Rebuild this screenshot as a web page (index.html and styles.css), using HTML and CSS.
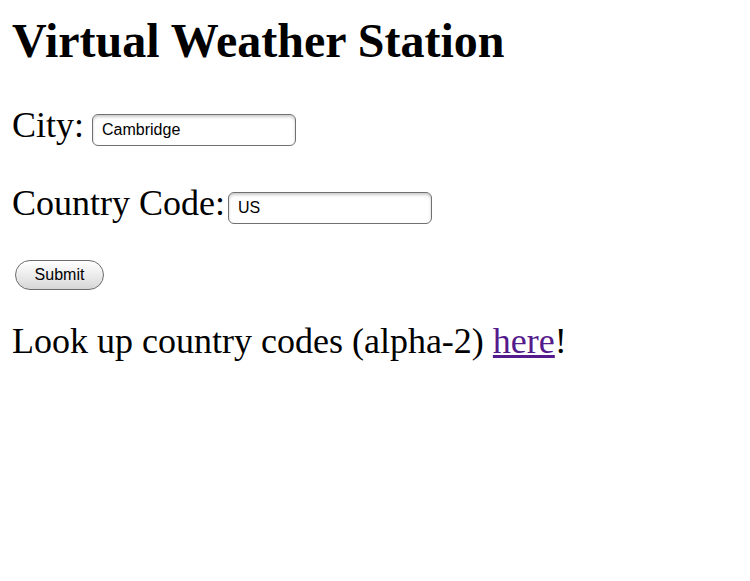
FILE: index.html
```html
<!DOCTYPE html>
<html>
<head>
<meta charset="utf-8">
<link rel="stylesheet" href="styles.css">
</head>
<body>
<h1 class="title">Virtual Weather Station</h1>
<form class="form">
  <p class="row row-city"><span class="label">City:</span><input class="field field-city" type="text" value="Cambridge"></p>
  <p class="row row-country"><span class="label">Country Code:</span><input class="field field-country" type="text" value="US"></p>
  <p class="row row-submit"><button class="submit" type="button">Submit</button></p>
</form>
<p class="note">Look up country codes (alpha-2) <a class="link" href="#">here</a>!</p>
</body>
</html>
```
FILE: styles.css
```css
body {
  margin: 0;
  padding: 0 12px;
  font-family: "Liberation Serif", "Times New Roman", serif;
  font-size: 36px;
  color: #000;
  background: #fff;
}
.title {
  font-size: 48px;
  font-weight: bold;
  margin: 13px 0 0;
  line-height: 56px;
}
.form { margin: 0; }
.row {
  margin: 0;
  display: flex;
  align-items: flex-start;
  line-height: 40px;
}
.row-city { margin-top: 36px; }
.row-country { margin-top: 37px; }
.row-submit { margin-top: 36px; }
.field {
  box-sizing: border-box;
  width: 204px;
  height: 32px;
  margin-top: 9px;
  padding: 0 9px;
  border: 1px solid #707070;
  border-radius: 6px;
  font-family: "Liberation Sans", Arial, sans-serif;
  font-size: 16px;
  color: #000;
  background: #fff;
  box-shadow: inset 0 2px 3px rgba(0,0,0,0.2);
  outline: none;
}
.field-city { margin-left: 8px; }
.field-country { margin-left: 3px; }
.submit {
  box-sizing: border-box;
  width: 89px;
  height: 30px;
  margin-left: 3px;
  border: 1px solid #6c6c6c;
  border-radius: 15px;
  background: linear-gradient(#ffffff, #eeeeee 45%, #d6d6d6);
  font-family: "Liberation Sans", Arial, sans-serif;
  font-size: 16px;
  line-height: 28px;
  color: #000;
  padding: 0;
}
.note {
  margin: 31px 0 0;
  line-height: 40px;
}
.link { color: #551a8b; }
```
